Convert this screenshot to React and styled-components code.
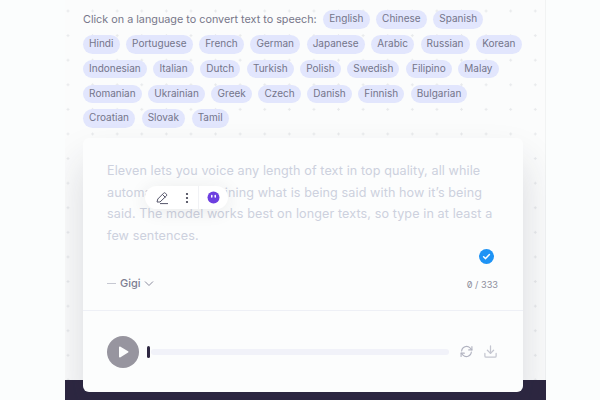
import React from "react";
import styled, { createGlobalStyle } from "styled-components";

const GlobalStyle = createGlobalStyle`
  html, body {
    margin: 0;
    padding: 0;
    width: 600px;
    height: 400px;
    overflow: hidden;
    background: #fbfdfd;
    font-family: "Inter", "Liberation Sans", sans-serif;
  }
`;

const Page = styled.div`
  width: 481px;
  height: 400px;
  margin-left: 65px;
  display: flex;
  flex-direction: column;
  overflow: hidden;
`;

const Stage = styled.div`
  height: 380px;
  flex: none;
  box-sizing: border-box;
  padding: 10px 22px 0 18px;
  background-color: #fbfcfc;
  border-right: 1px solid #f1f3f3;
  background-image: radial-gradient(circle, #e8eaec 1px, transparent 1.4px);
  background-size: 24.6px 24.6px;
  background-position: -9.3px -1.3px;
`;

const Languages = styled.div`
  display: flex;
  flex-wrap: wrap;
  align-items: center;
  align-content: flex-start;
  column-gap: 6.5px;
  row-gap: 6.4px;
  height: 128px;
`;

const Intro = styled.span`
  font-size: 10.8px;
  line-height: 19px;
  color: #77778a;
`;

const Chip = styled.span`
  height: 18.3px;
  line-height: 17px;
  padding: 0 6.1px;
  border-radius: 10px;
  background: #e2e6fd;
  color: #74758a;
  font-size: 10px;
`;

const Card = styled.div`
  position: relative;
  z-index: 1;
  height: 254px;
  background: #fcfdfd;
  border-radius: 6px;
  box-shadow: 0 24px 40px rgba(40, 40, 60, 0.16);
  display: flex;
  flex-direction: column;
`;

const Editor = styled.div`
  position: relative;
  height: 173px;
  box-sizing: border-box;
  padding: 22px 24px 0;
  border-bottom: 1px solid #eef0f6;
`;

const Copy = styled.p`
  margin: 0;
  font-size: 12.6px;
  line-height: 21.7px;
  color: #cdd1de;
  letter-spacing: 0.1px;
`;

const Toolbar = styled.div`
  position: absolute;
  left: 62px;
  top: 48px;
  width: 83px;
  height: 23px;
  display: flex;
  align-items: center;
  background: #fff;
  border-radius: 12px;
  box-shadow: 0 2px 18px rgba(40, 40, 60, 0.09);
`;

const ToolSlot = styled.div`
  width: ${(p) => p.$w}px;
  height: 23px;
  box-sizing: border-box;
  display: flex;
  align-items: center;
  justify-content: center;
  padding-right: ${(p) => (p.$divider ? "3px" : "0")};
  border-right: ${(p) => (p.$divider ? "1px solid #f1f2f5" : "none")};
`;

const Verified = styled.div`
  position: absolute;
  right: 29px;
  top: 111px;
  width: 15px;
  height: 15px;
  border-radius: 50%;
  background: #1e93f5;
  display: flex;
  align-items: center;
  justify-content: center;
`;

const EditorFoot = styled.div`
  position: absolute;
  left: 24px;
  right: 25px;
  top: 138px;
  display: flex;
  align-items: center;
  justify-content: space-between;
`;

const Speaker = styled.div`
  display: flex;
  align-items: center;
  font-size: 11px;
  font-weight: 500;
  color: #7d7e92;
  gap: 3px;
`;

const Dash = styled.span`
  width: 9px;
  height: 1px;
  background: #c6c8d2;
  margin-right: 1px;
`;

const Counter = styled.span`
  font-size: 9.2px;
  color: #8c8d9c;
  margin-top: 3px;
  font-feature-settings: "zero";
`;

const Player = styled.div`
  flex: 1;
  display: flex;
  align-items: center;
  padding: 0 24px 0 24px;
`;

const PlayButton = styled.div`
  width: 32px;
  height: 32px;
  border-radius: 50%;
  background: #97959f;
  flex: none;
  display: flex;
  align-items: center;
  justify-content: center;
`;

const Marker = styled.span`
  width: 3px;
  height: 12px;
  border-radius: 2px;
  background: #2d2741;
  margin-left: 8px;
  flex: none;
`;

const Track = styled.div`
  width: 298px;
  height: 6px;
  margin-left: 1px;
  background: #f1f2f9;
  border-radius: 3px;
  flex: none;
`;

const PlayerIcons = styled.div`
  display: flex;
  align-items: center;
  gap: 10px;
  margin-left: 11px;
`;

const DarkBand = styled.div`
  height: 20px;
  flex: none;
  background: #2d2741;
`;

const languages = [
  "English", "Chinese", "Spanish", "Hindi", "Portuguese", "French", "German", "Japanese",
  "Arabic", "Russian", "Korean", "Indonesian", "Italian", "Dutch", "Turkish", "Polish",
  "Swedish", "Filipino", "Malay", "Romanian", "Ukrainian", "Greek", "Czech", "Danish",
  "Finnish", "Bulgarian", "Croatian", "Slovak", "Tamil",
];

export default function App() {
  return (
    <>
      <GlobalStyle />
      <Page>
        <Stage>
          <Languages>
            <Intro>Click on a language to convert text to speech:</Intro>
            {languages.map((l) => (
              <Chip key={l}>{l}</Chip>
            ))}
          </Languages>
          <Card>
            <Editor>
              <Copy>
                Eleven lets you voice any length of text in top quality, all while automatically combining what is being said with how it’s being said. The model works best on longer texts, so type in at least a few sentences.
              </Copy>
              <Toolbar>
                <ToolSlot $w={33}>
                  <svg width="14" height="14" viewBox="0 0 14 14" fill="none" stroke="#55556a" strokeWidth="1">
                    <path d="M2 11l.8-3L8.6 2.2a1.2 1.2 0 0 1 1.8 0l1 1a1.2 1.2 0 0 1 0 1.7L5 11l-3 0z" />
                    <path d="M7.4 3.4l3 3" />
                    <path d="M5 12.6h8" />
                  </svg>
                </ToolSlot>
                <ToolSlot $w={21} $divider>
                  <svg width="4" height="12" viewBox="0 0 4 12" fill="#3a3a4c">
                    <circle cx="2" cy="2" r="1.1" />
                    <circle cx="2" cy="6" r="1.1" />
                    <circle cx="2" cy="10" r="1.1" />
                  </svg>
                </ToolSlot>
                <ToolSlot $w={28}>
                  <svg width="13" height="13" viewBox="0 0 13 13">
                    <circle cx="6.5" cy="6.5" r="6" fill="#6d3fe0" />
                    <rect x="4" y="3.8" width="1.5" height="3" rx="0.7" fill="#fff" />
                    <rect x="7.5" y="3.8" width="1.5" height="3" rx="0.7" fill="#fff" />
                  </svg>
                </ToolSlot>
              </Toolbar>
              <Verified>
                <svg width="9" height="9" viewBox="0 0 9 9" fill="none" stroke="#fff" strokeWidth="1.5" strokeLinecap="round" strokeLinejoin="round">
                  <path d="M1.6 4.8l2 1.8 3.8-4" />
                </svg>
              </Verified>
              <EditorFoot>
                <Speaker>
                  <Dash />
                  <span>Gigi</span>
                  <svg width="10" height="7" viewBox="0 0 10 7" fill="none" stroke="#8b8c9e" strokeWidth="1">
                    <path d="M1 1.5l4 4 4-4" />
                  </svg>
                </Speaker>
                <Counter>0 / 333</Counter>
              </EditorFoot>
            </Editor>
            <Player>
              <PlayButton>
                <svg width="11" height="12" viewBox="0 0 11 12" fill="#fcfdfd">
                  <path d="M1 1.2c0-.6.6-1 1.1-.7l8 4.8c.5.3.5 1 0 1.3l-8 4.8c-.5.3-1.1-.1-1.1-.7V1.2z" />
                </svg>
              </PlayButton>
              <Marker />
              <Track />
              <PlayerIcons>
                <svg width="13" height="13" viewBox="0 0 24 24" fill="none" stroke="#b1b3c0" strokeWidth="2" strokeLinecap="round" strokeLinejoin="round">
                  <path d="M3 11a9 9 0 0 1 15.5-5.5L22 9" />
                  <path d="M22 3v6h-6" />
                  <path d="M21 13a9 9 0 0 1-15.5 5.5L2 15" />
                  <path d="M2 21v-6h6" />
                </svg>
                <svg width="15" height="15" viewBox="0 0 24 24" fill="none" stroke="#c4c6d0" strokeWidth="2" strokeLinecap="round" strokeLinejoin="round">
                  <path d="M3 15v4a2 2 0 0 0 2 2h14a2 2 0 0 0 2-2v-4" />
                  <path d="M7 10l5 5 5-5" />
                  <path d="M12 15V3" />
                </svg>
              </PlayerIcons>
            </Player>
          </Card>
        </Stage>
        <DarkBand />
      </Page>
    </>
  );
}
